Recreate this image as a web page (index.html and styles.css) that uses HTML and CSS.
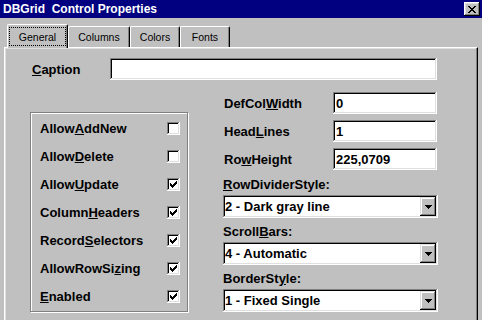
FILE: index.html
```html
<!DOCTYPE html>
<html>
<head>
<meta charset="utf-8">
<link rel="stylesheet" href="styles.css">
</head>
<body>
<div class="window">
  <div class="titlebar">
    <span class="title">DBGrid&nbsp; Control Properties</span>
    <span class="close">
      <svg width="8" height="7" viewBox="0 0 8 7" shape-rendering="crispEdges"><path d="M0 0h2v1H0z M6 0h2v1H6z M1 1h2v1H1z M5 1h2v1H5z M2 2h4v1H2z M3 3h2v1H3z M2 4h4v1H2z M1 5h2v1H1z M5 5h2v1H5z M0 6h2v1H0z M6 6h2v1H6z" fill="#000"/></svg>
    </span>
  </div>
  <div class="content">
    <div class="tabs">
      <div class="tab selected"><span class="focus">General</span></div>
      <div class="tab t-columns">Columns</div>
      <div class="tab t-colors">Colors</div>
      <div class="tab t-fonts">Fonts</div>
    </div>
    <div class="panel">
      <div class="caption-row">
        <span class="lbl caption-lbl"><u>C</u>aption</span>
        <div class="field caption-field"></div>
      </div>
      <div class="main">
        <div class="group">
          <div class="row"><span class="lbl">Allow<u>A</u>ddNew</span><span class="check"></span></div>
          <div class="row"><span class="lbl">Allow<u>D</u>elete</span><span class="check"></span></div>
          <div class="row"><span class="lbl">Allow<u>U</u>pdate</span><span class="check on"><svg width="7" height="7" viewBox="0 0 7 7" shape-rendering="crispEdges"><path d="M0 2h1v3H0z M1 3h1v3H1z M2 4h1v3H2z M3 3h1v3H3z M4 2h1v3H4z M5 1h1v3H5z M6 0h1v3H6z" fill="#000"/></svg></span></div>
          <div class="row"><span class="lbl">Column<u>H</u>eaders</span><span class="check on"><svg width="7" height="7" viewBox="0 0 7 7" shape-rendering="crispEdges"><path d="M0 2h1v3H0z M1 3h1v3H1z M2 4h1v3H2z M3 3h1v3H3z M4 2h1v3H4z M5 1h1v3H5z M6 0h1v3H6z" fill="#000"/></svg></span></div>
          <div class="row"><span class="lbl">Record<u>S</u>electors</span><span class="check on"><svg width="7" height="7" viewBox="0 0 7 7" shape-rendering="crispEdges"><path d="M0 2h1v3H0z M1 3h1v3H1z M2 4h1v3H2z M3 3h1v3H3z M4 2h1v3H4z M5 1h1v3H5z M6 0h1v3H6z" fill="#000"/></svg></span></div>
          <div class="row"><span class="lbl">AllowRowSi<u>z</u>ing</span><span class="check on"><svg width="7" height="7" viewBox="0 0 7 7" shape-rendering="crispEdges"><path d="M0 2h1v3H0z M1 3h1v3H1z M2 4h1v3H2z M3 3h1v3H3z M4 2h1v3H4z M5 1h1v3H5z M6 0h1v3H6z" fill="#000"/></svg></span></div>
          <div class="row"><span class="lbl"><u>E</u>nabled</span><span class="check on"><svg width="7" height="7" viewBox="0 0 7 7" shape-rendering="crispEdges"><path d="M0 2h1v3H0z M1 3h1v3H1z M2 4h1v3H2z M3 3h1v3H3z M4 2h1v3H4z M5 1h1v3H5z M6 0h1v3H6z" fill="#000"/></svg></span></div>
        </div>
        <div class="right">
          <div class="frow"><span class="lbl flbl">DefCol<u>W</u>idth</span><div class="field num">0</div></div>
          <div class="frow"><span class="lbl flbl">Head<u>L</u>ines</span><div class="field num">1</div></div>
          <div class="frow"><span class="lbl flbl">Ro<u>w</u>Height</span><div class="field num">225,0709</div></div>
          <div class="combo-label lbl"><u>R</u>owDividerStyle:</div>
          <div class="combo"><span class="combo-text">2 - Dark gray line</span><span class="dd"><svg width="7" height="4" viewBox="0 0 7 4" shape-rendering="crispEdges"><path d="M0 0h7v1H0z M1 1h5v1H1z M2 2h3v1H2z M3 3h1v1H3z" fill="#000"/></svg></span></div>
          <div class="combo-label lbl">Scroll<u>B</u>ars:</div>
          <div class="combo"><span class="combo-text">4 - Automatic</span><span class="dd"><svg width="7" height="4" viewBox="0 0 7 4" shape-rendering="crispEdges"><path d="M0 0h7v1H0z M1 1h5v1H1z M2 2h3v1H2z M3 3h1v1H3z" fill="#000"/></svg></span></div>
          <div class="combo-label lbl">BorderSt<u>y</u>le:</div>
          <div class="combo"><span class="combo-text">1 - Fixed Single</span><span class="dd"><svg width="7" height="4" viewBox="0 0 7 4" shape-rendering="crispEdges"><path d="M0 0h7v1H0z M1 1h5v1H1z M2 2h3v1H2z M3 3h1v1H3z" fill="#000"/></svg></span></div>
        </div>
      </div>
    </div>
  </div>
</div>
</body>
</html>
```
FILE: styles.css
```css
html, body {
  margin: 0;
  padding: 0;
}
body {
  width: 482px;
  height: 320px;
  overflow: hidden;
  background: #c0c0c0;
  font-family: "Liberation Sans", Arial, sans-serif;
  color: #000;
}
.window {
  width: 482px;
  height: 320px;
  overflow: hidden;
}
.titlebar {
  height: 18px;
  background: #000080;
  color: #fff;
  display: flex;
  align-items: center;
  justify-content: space-between;
  padding: 0 2px 0 3px;
  font-weight: bold;
  font-size: 12px;
}
.title {
  white-space: nowrap;
}
.close {
  width: 16px;
  height: 14px;
  background: #c0c0c0;
  display: flex;
  align-items: center;
  justify-content: center;
  box-shadow: inset -1px -1px 0 #000, inset 1px 1px 0 #fff, inset -2px -2px 0 #808080, inset 2px 2px 0 #dfdfdf;
}
.content {
  padding: 6px 4px 0 4px;
}
.tabs {
  display: flex;
  align-items: flex-end;
  height: 23px;
  padding-left: 3px;
  position: relative;
  z-index: 1;
}
.tab {
  box-sizing: border-box;
  height: 21px;
  background: #c0c0c0;
  border-top: 1px solid #fff;
  border-left: 1px solid #fff;
  border-right: 1px solid #000;
  border-radius: 2px 2px 0 0;
  box-shadow: inset -1px 0 0 #808080;
  font-size: 10.5px;
  display: flex;
  align-items: center;
  justify-content: center;
  padding-bottom: 1px;
}
.tab.selected {
  width: 61px;
  height: 24px;
  margin-bottom: -1px;
  align-items: flex-start;
  padding: 2px 1px 0 1px;
}
.focus {
  box-sizing: border-box;
  width: 57px;
  height: 19px;
  border: 1px dotted #000;
  display: flex;
  align-items: center;
  justify-content: center;
}
.t-columns {
  width: 62px;
}
.t-colors {
  width: 50px;
}
.t-fonts {
  width: 50px;
}
.panel {
  box-sizing: border-box;
  height: 273px;
  border-top: 1px solid #fff;
  border-left: 1px solid #fff;
  border-right: 1px solid #000;
  box-shadow: inset -1px 0 0 #808080, inset 1px 1px 0 #dfdfdf;
  padding: 10px 0 0 25px;
}
.lbl {
  font-weight: bold;
  font-size: 13px;
  white-space: nowrap;
}
.caption-row {
  display: flex;
  align-items: center;
  height: 22px;
}
.caption-lbl {
  box-sizing: border-box;
  width: 80px;
  padding-left: 2px;
}
.field {
  box-sizing: border-box;
  height: 22px;
  background: #fff;
  box-shadow: inset -1px -1px 0 #fff, inset 1px 1px 0 #808080, inset -2px -2px 0 #dfdfdf, inset 2px 2px 0 #000;
}
.caption-field {
  width: 327px;
}
.main {
  display: flex;
  align-items: flex-start;
  margin-top: 12px;
}
.group {
  box-sizing: border-box;
  width: 158px;
  margin-top: 20px;
  border: 1px solid #808080;
  box-shadow: inset 1px 1px 0 #fff, 1px 1px 0 #fff;
  padding: 1px 7px 1px 9px;
}
.row {
  height: 28px;
  display: flex;
  align-items: center;
  justify-content: space-between;
}
.check {
  box-sizing: border-box;
  width: 13px;
  height: 13px;
  background: #fff;
  box-shadow: inset -1px -1px 0 #fff, inset 1px 1px 0 #808080, inset -2px -2px 0 #dfdfdf, inset 2px 2px 0 #000;
  display: flex;
  padding: 3px 0 0 3px;
}
.check svg {
  display: block;
}
.right {
  width: 215px;
  margin-left: 35px;
  display: flex;
  flex-direction: column;
}
.frow {
  display: flex;
  align-items: center;
  height: 22px;
}
.frow + .frow {
  margin-top: 6px;
}
.flbl {
  box-sizing: border-box;
  width: 110px;
  padding-left: 1px;
}
.num {
  width: 104px;
  font-weight: bold;
  font-size: 13px;
  display: flex;
  align-items: center;
  padding-left: 3px;
}
.combo-label {
  line-height: 16px;
  height: 16px;
  margin-top: 6px;
}
.frow + .combo-label {
  margin-top: 7px;
}
.combo {
  box-sizing: border-box;
  margin-top: 2px;
  width: 215px;
  height: 23px;
  background: #fff;
  box-shadow: inset -1px -1px 0 #fff, inset 1px 1px 0 #808080, inset -2px -2px 0 #dfdfdf, inset 2px 2px 0 #000;
  display: flex;
  align-items: center;
  padding: 2px;
}
.combo-text {
  flex: 1;
  font-weight: bold;
  font-size: 13px;
  white-space: nowrap;
}
.dd {
  width: 16px;
  height: 19px;
  background: #c0c0c0;
  box-shadow: inset -1px -1px 0 #000, inset 1px 1px 0 #dfdfdf, inset -2px -2px 0 #808080, inset 2px 2px 0 #fff;
  display: flex;
  align-items: center;
  justify-content: center;
}
.dd svg {
  display: block;
}
```
